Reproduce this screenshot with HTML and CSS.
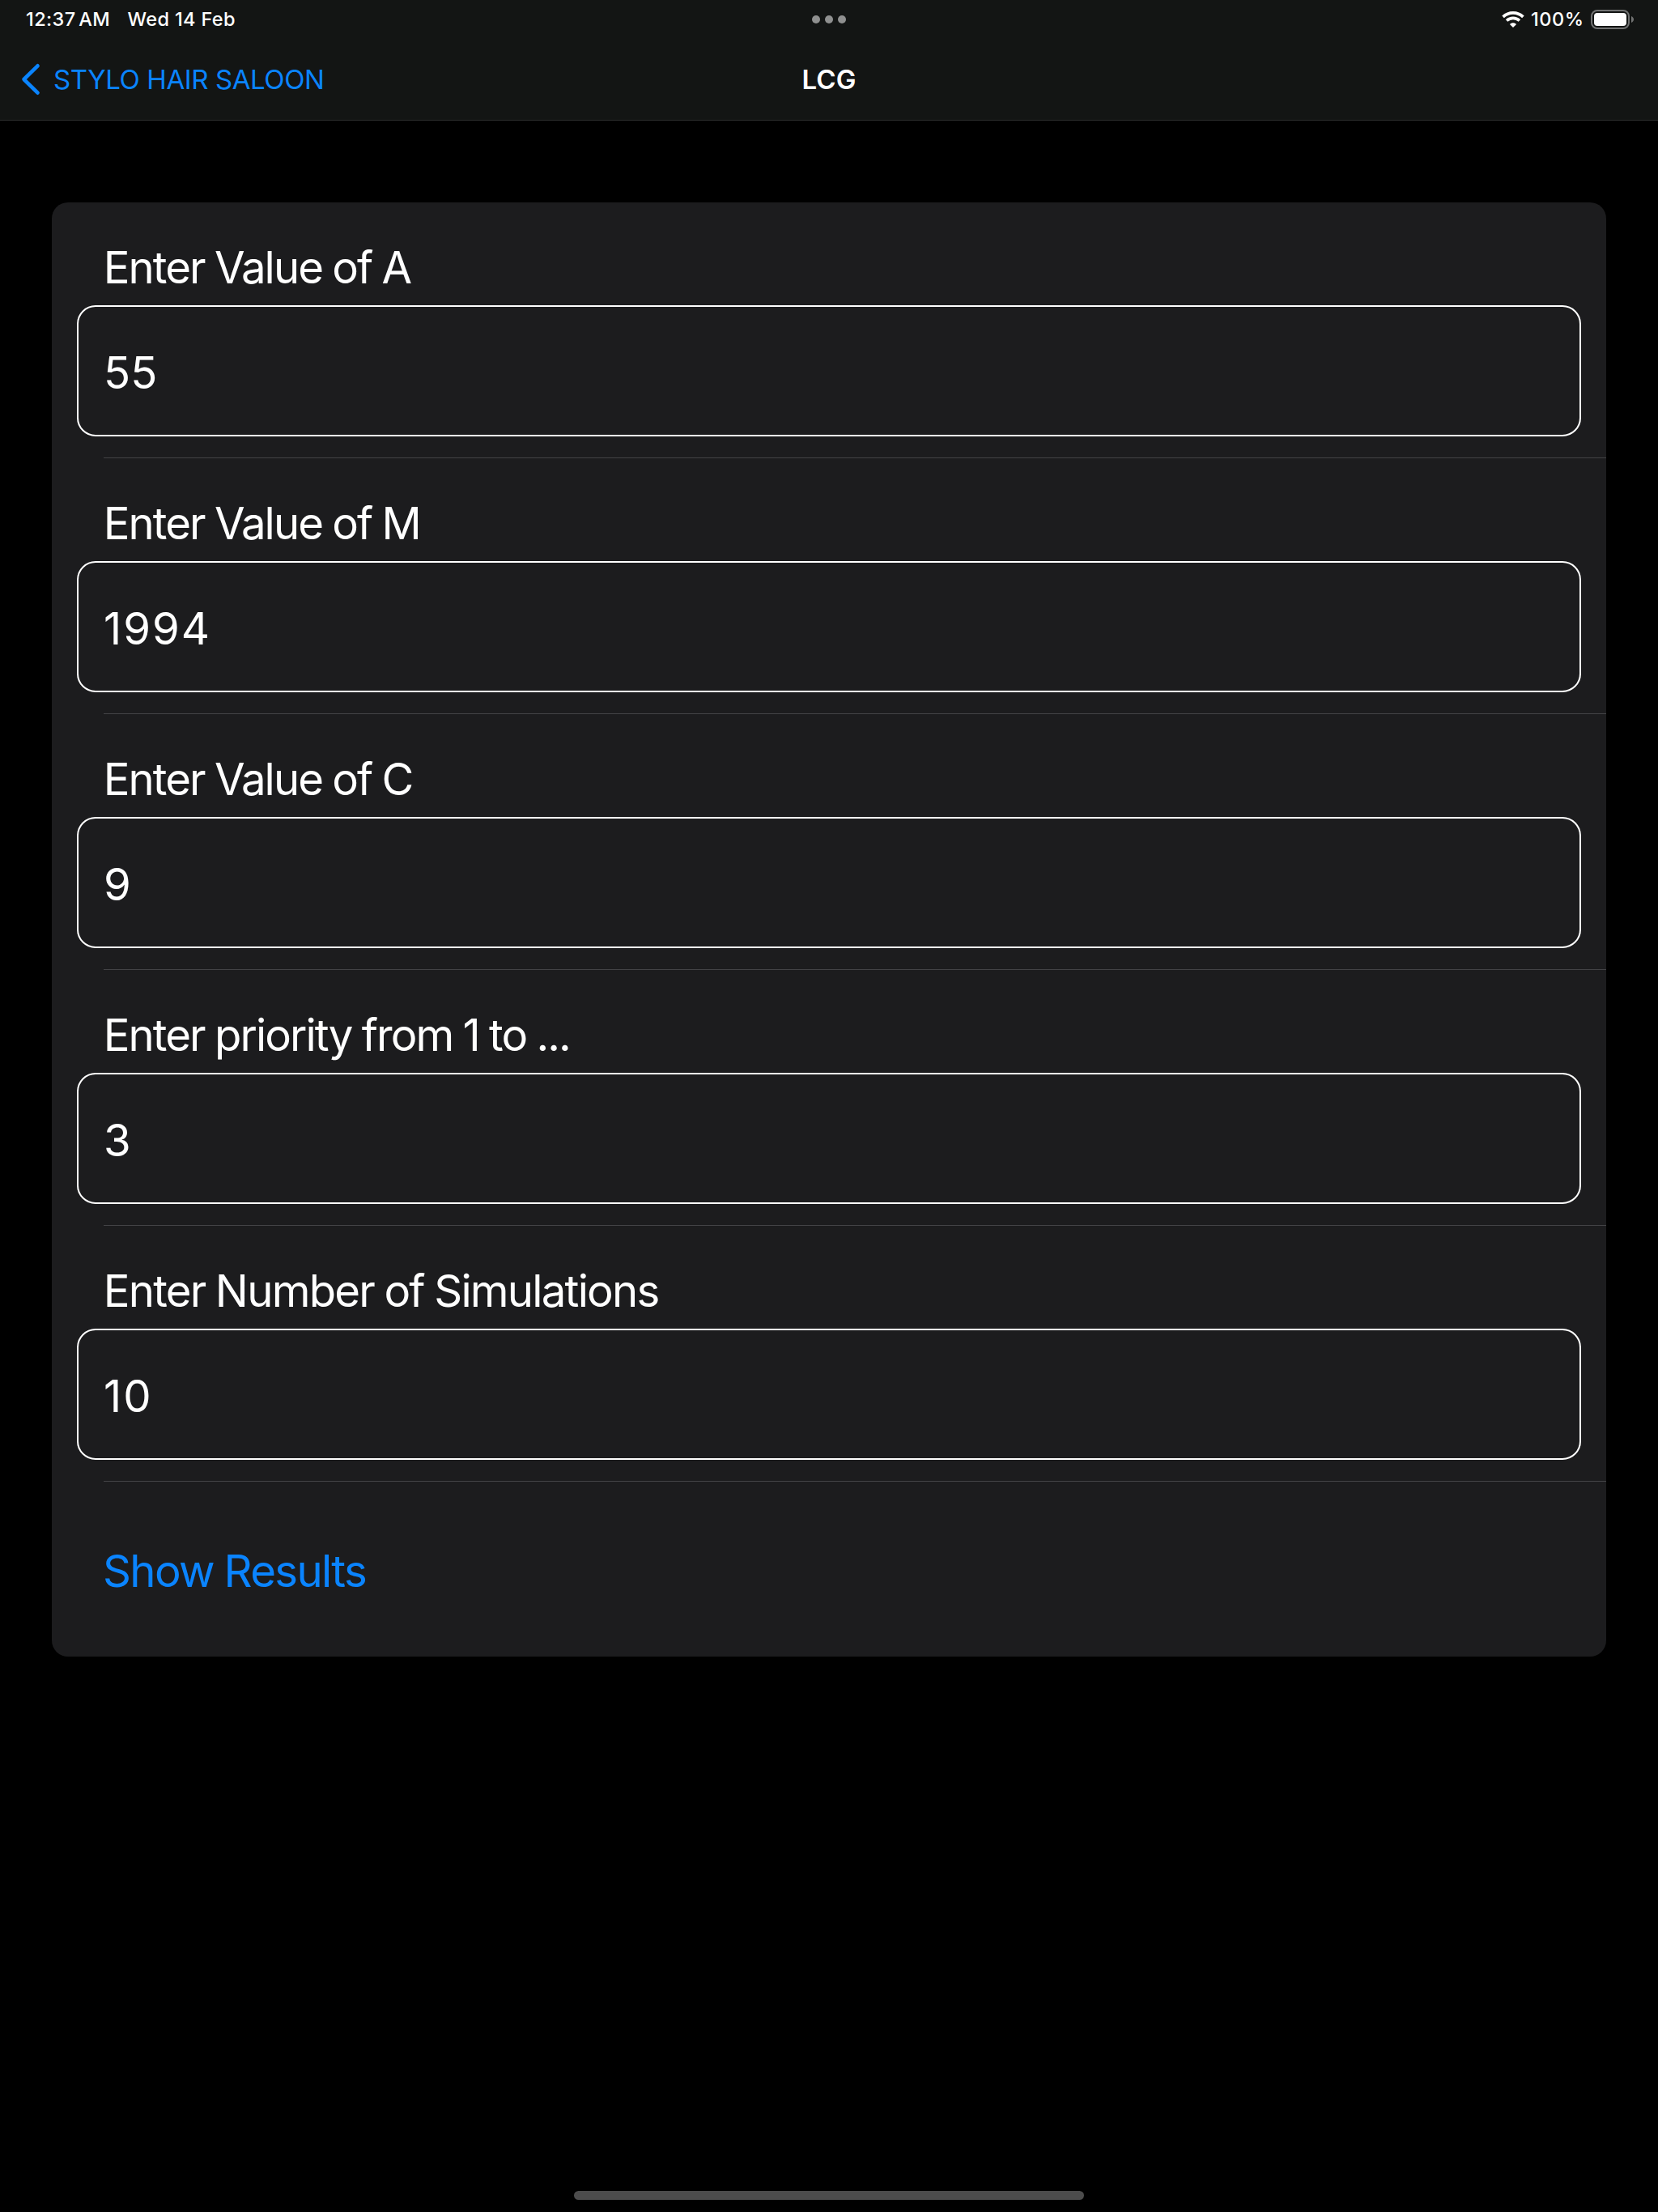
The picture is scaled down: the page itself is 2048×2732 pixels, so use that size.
FILE: index.html
```html
<!DOCTYPE html>
<html lang="en">
<head>
<meta charset="utf-8">
<title>LCG</title>
<link rel="stylesheet" href="styles.css">
</head>
<body>
<header class="header">
  <div class="status">
    <div class="status-left"><span class="time">12:37 AM</span><span class="date">Wed 14 Feb</span></div>
    <div class="dots"><i class="dot"></i><i class="dot"></i><i class="dot"></i></div>
    <div class="status-right">
      <svg class="wifi" width="28" height="20" viewBox="0 0 28 20" fill="none" stroke="#fff" stroke-width="3.7">
        <path d="M1.6 6.9C8.5 .2 19.500 .2 26.400 6.900"/>
        <path d="M6.100 11.500C10.500 7.300 17.500 7.300 21.900 11.500"/>
        <path d="M14 20L9.900 15.900C12.200 13.700 15.800 13.700 18.100 15.900Z" fill="#fff" stroke="none"/>
      </svg>
      <span class="percent">100%</span>
      <svg class="battery" width="54" height="24" viewBox="0 0 54 24">
        <rect x="1" y="1" width="46" height="22" rx="7" fill="none" stroke="#717272" stroke-width="2"/>
        <rect x="4" y="4" width="40" height="16" rx="4" fill="#fff"/>
        <path d="M50 8C54 9.500 54 14.500 50 16Z" fill="#717272"/>
      </svg>
    </div>
  </div>
  <nav class="nav">
    <a class="back">
      <svg class="chevron" width="24" height="40" viewBox="0 0 24 40" fill="none" stroke="#0a84ff" stroke-width="4.600" stroke-linecap="round" stroke-linejoin="round"><path d="M20.500 3.300L3.500 20L20.500 36.700"/></svg>
      <span class="back-label">STYLO HAIR SALOON</span>
    </a>
    <h1 class="title">LCG</h1>
  </nav>
</header>
<main class="card">
  <section class="row"><label class="label">Enter Value of A</label><div class="field"><span class="value">55</span></div></section>
  <section class="row"><label class="label">Enter Value of M</label><div class="field"><span class="value spaced">1994</span></div></section>
  <section class="row"><label class="label">Enter Value of C</label><div class="field"><span class="value">9</span></div></section>
  <section class="row"><label class="label">Enter priority from 1 to ...</label><div class="field"><span class="value">3</span></div></section>
  <section class="row"><label class="label label-long">Enter Number of Simulations</label><div class="field"><span class="value spaced">10</span></div></section>
  <section class="action"><a class="show">Show Results</a></section>
</main>
<footer class="footer"><div class="home-bar"></div></footer>
</body>
</html>
```
FILE: styles.css
```css
* { box-sizing: border-box; }
body {
  margin: 0;
  width: 2048px;
  height: 2732px;
  display: flex;
  flex-direction: column;
  background: #000;
  color: #fff;
  font-family: Inter, "Liberation Sans", sans-serif;
  overflow: hidden;
}
.header {
  height: 149px;
  flex: none;
  background: #131514;
  border-bottom: 1px solid #2b2c2c;
}
.status {
  height: 48px;
  display: grid;
  grid-template-columns: 1fr auto 1fr;
  align-items: center;
  padding: 0 29px;
  font-size: 23.5px;
  font-weight: 500;
  line-height: 30px;
  white-space: nowrap;
}
.status-left { display: flex; gap: 21.5px; padding-left: 3px; }
.time { letter-spacing: 0.4px; word-spacing: -3px; }
.date { letter-spacing: 0.35px; }
.dots { display: flex; gap: 6px; }
.dot { width: 10px; height: 10px; border-radius: 50%; background: #8f9090; }
.status-right { display: flex; justify-content: flex-end; align-items: center; }
.percent { margin: 0 8.5px 0 8px; letter-spacing: 0.5px; }
.nav {
  height: 100px;
  display: grid;
  grid-template-columns: 1fr auto 1fr;
  align-items: center;
  font-size: 33px;
  line-height: 40px;
}
.back { display: flex; align-items: center; padding-left: 26px; gap: 16px; color: #0a84ff; white-space: nowrap; }
.back-label { letter-spacing: -0.41px; }
.title { margin: 0; font-size: 33px; font-weight: 600; }
.card {
  width: 1920px;
  height: 1796px;
  flex: none;
  margin: 101px auto 0;
  background: #1c1c1e;
  border-radius: 20px;
  font-size: 54.5px;
  line-height: 64px;
  white-space: nowrap;
}
.row {
  height: 316px;
  padding: 48px 31px 0;
  background: linear-gradient(#434346, #434346) 64px 100% / 100% 1px no-repeat;
}
.label {
  display: block;
  height: 64px;
  margin: 0 0 15px 32.7px;
  letter-spacing: -1.9px;
  word-spacing: -1.2px;
}
.label-long { letter-spacing: -1.75px; }
.field {
  height: 162px;
  display: flex;
  align-items: center;
  padding: 4px 31px 0;
  border: 2px solid #fff;
  border-radius: 23px;
}
.spaced { letter-spacing: 2px; }
.action { height: 216px; display: flex; align-items: center; padding: 4px 63px 0; color: #0a84ff; }
.show { letter-spacing: -1.65px; word-spacing: -1px; }
.footer { flex: 1; display: flex; align-items: flex-end; justify-content: center; padding-bottom: 15px; }
.home-bar { width: 630px; height: 11px; border-radius: 6px; background: #4c4c4c; }
```
